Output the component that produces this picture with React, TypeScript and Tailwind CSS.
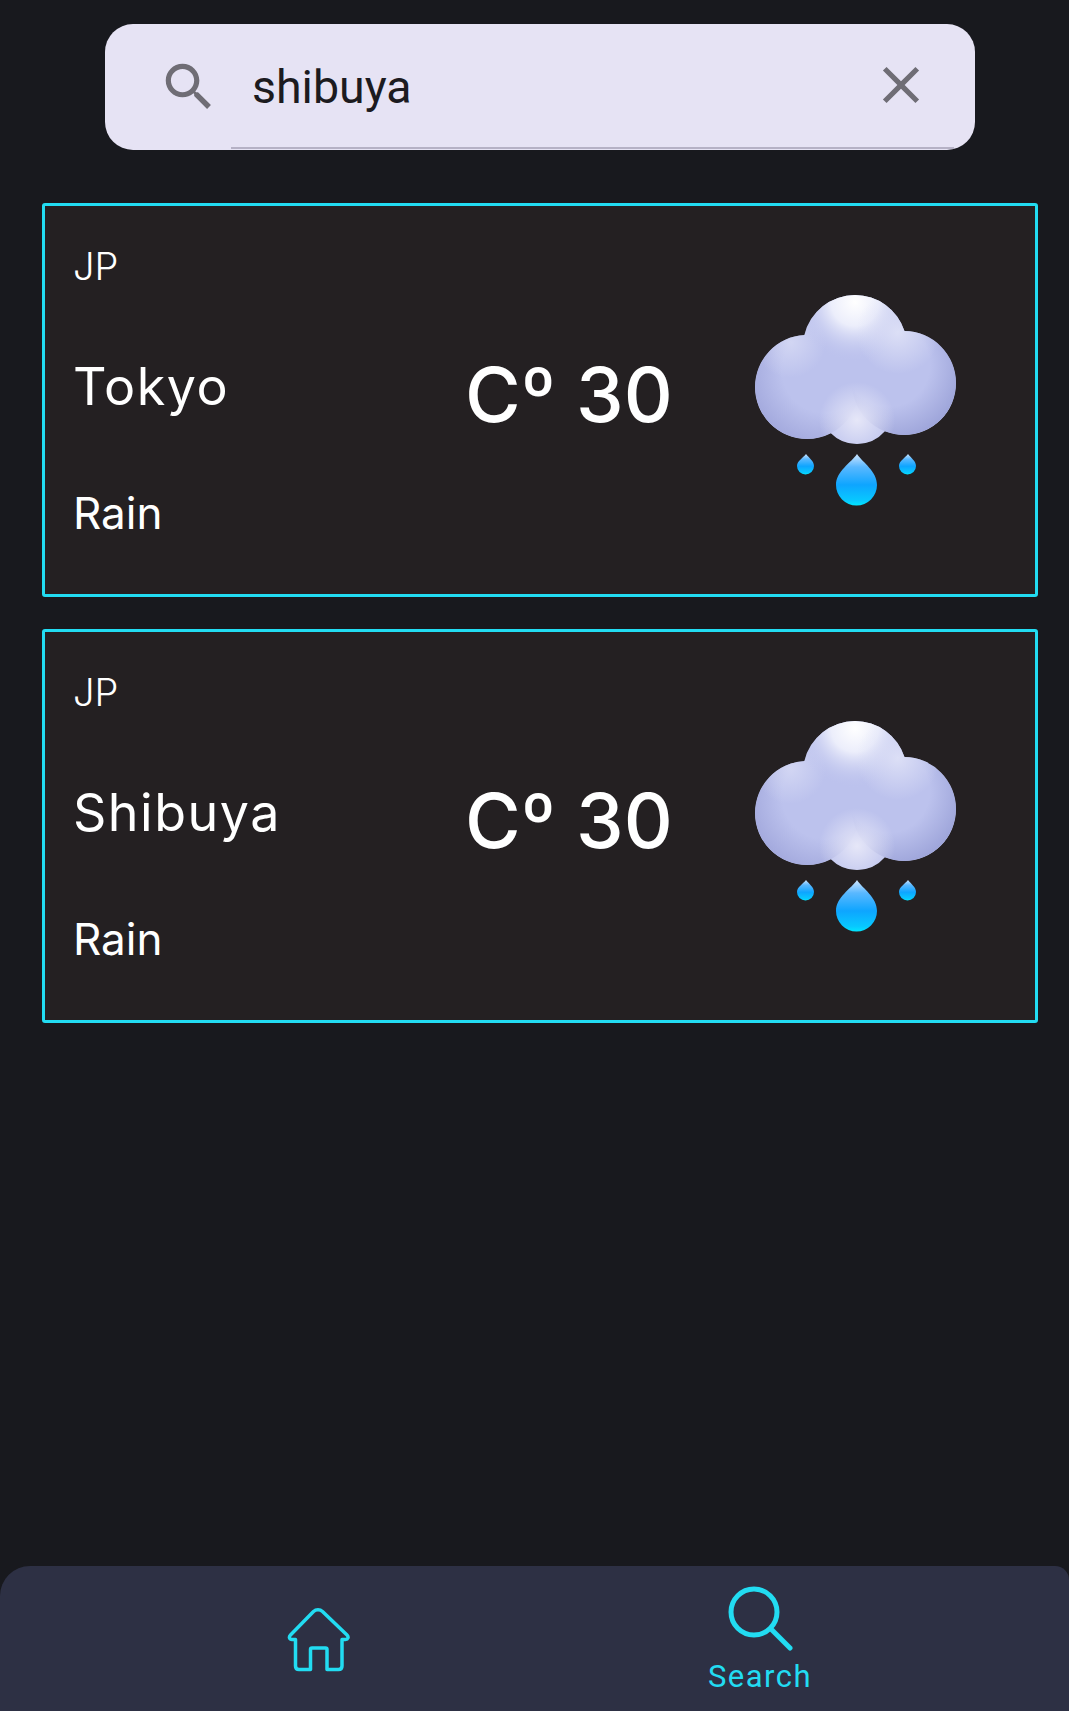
function RainCloud({ id }: { id: string }) {
  return (
    <svg width="260" height="250" viewBox="0 0 260 250" className="mb-[11px] shrink-0">
      <defs>
        <clipPath id={`${id}-shape`}>
          <circle cx="135" cy="77" r="52" />
          <circle cx="87" cy="117" r="52" />
          <circle cx="184" cy="113" r="52" />
          <circle cx="137" cy="137" r="37" />
          <rect x="95" y="85" width="80" height="50" />
        </clipPath>
        <radialGradient id={`${id}-top`} cx="135" cy="32" r="60" gradientUnits="userSpaceOnUse">
          <stop offset="0" stopColor="#ffffff" />
          <stop offset="0.4" stopColor="#eceefb" />
          <stop offset="1" stopColor="#bcc2ed" stopOpacity="0" />
        </radialGradient>
        <radialGradient id={`${id}-left`} cx="105" cy="100" r="78" gradientUnits="userSpaceOnUse">
          <stop offset="0.55" stopColor="#a3a9dd" stopOpacity="0" />
          <stop offset="1" stopColor="#a3a9dd" />
        </radialGradient>
        <radialGradient id={`${id}-right`} cx="168" cy="95" r="76" gradientUnits="userSpaceOnUse">
          <stop offset="0.55" stopColor="#9ea5da" stopOpacity="0" />
          <stop offset="1" stopColor="#9ea5da" />
        </radialGradient>
        <radialGradient id={`${id}-shine`} cx="178" cy="62" r="42" gradientUnits="userSpaceOnUse">
          <stop offset="0" stopColor="#dcdff6" />
          <stop offset="1" stopColor="#dcdff6" stopOpacity="0" />
        </radialGradient>
        <radialGradient id={`${id}-glow`} cx="70" cy="72" r="36" gradientUnits="userSpaceOnUse">
          <stop offset="0" stopColor="#dcdff6" stopOpacity="0.7" />
          <stop offset="1" stopColor="#dcdff6" stopOpacity="0" />
        </radialGradient>
        <radialGradient id={`${id}-bottom`} cx="137" cy="150" r="38" gradientUnits="userSpaceOnUse">
          <stop offset="0" stopColor="#e6e7f8" />
          <stop offset="1" stopColor="#e6e7f8" stopOpacity="0" />
        </radialGradient>
        <linearGradient id={`${id}-drop`} x1="0" y1="0" x2="0" y2="1">
          <stop offset="0" stopColor="#cfe6ff" />
          <stop offset="0.25" stopColor="#5ab8ff" />
          <stop offset="0.6" stopColor="#0ea5ff" />
          <stop offset="0.9" stopColor="#08c8ff" />
          <stop offset="1" stopColor="#00e6ff" />
        </linearGradient>
      </defs>
      <g clipPath={`url(#${id}-shape)`}>
        <rect width="260" height="190" fill="#bcc2ed" />
        <circle cx="87" cy="117" r="52" fill={`url(#${id}-left)`} />
        <circle cx="184" cy="113" r="52" fill={`url(#${id}-right)`} />
        <rect width="260" height="190" fill={`url(#${id}-glow)`} />
        <rect width="260" height="190" fill={`url(#${id}-top)`} />
        <rect width="260" height="190" fill={`url(#${id}-shine)`} />
        <rect width="260" height="190" fill={`url(#${id}-bottom)`} />
      </g>
      <path d="M137 184C131 193 116 201 116 215A20.500 20.500 0 0 0 157 215C157 201 143 193 137 184Z" fill={`url(#${id}-drop)`} />
      <path d="M86 184C83 188 77 191 77 196A8.200 8.200 0 0 0 94 196C94 191 89 188 86 184Z" fill={`url(#${id}-drop)`} />
      <path d="M188 184C185 188 179 191 179 196A8.200 8.200 0 0 0 196 196C196 191 191 188 188 184Z" fill={`url(#${id}-drop)`} />
    </svg>
  )
}

function CityCard({ id, city }: { id: string; city: string }) {
  return (
    <div className="flex h-[394px] items-center rounded-[3px] border-[3px] border-[#22dcf2] bg-[#242022] pl-[28px] pr-[55px] text-white">
      <div className="flex h-full w-[392px] shrink-0 flex-col justify-between pt-[34px] pb-[53px] font-['Inter',sans-serif] font-light">
        <p className="text-[38px] leading-[52px]">JP</p>
        <p className="mb-[4px] text-[52px] font-normal leading-[70px] tracking-[1.500px]">{city}</p>
        <p className="text-[44px] font-normal leading-[56px]">Rain</p>
      </div>
      <p className="flex-1 pb-[13px] font-['Inter',sans-serif] text-[76px] font-medium leading-none">Cº 30</p>
      <RainCloud id={id} />
    </div>
  )
}

export default function App() {
  return (
    <div className="flex h-screen flex-col overflow-hidden bg-[#18191e]">
      <div className="ml-[105px] mr-[94px] mt-[24px] flex h-[126px] items-stretch rounded-[28px] bg-[#e6e3f4]">
        <div className="flex w-[126px] shrink-0 items-center justify-center pl-[42px]">
          <svg width="62" height="62" viewBox="0 0 24 24" fill="#6f6d75">
            <path d="M15.500 14h-.79l-.28-.27C15.410 12.590 16 11.110 16 9.500 16 5.910 13.090 3 9.500 3S3 5.910 3 9.500 5.910 16 9.500 16c1.610 0 3.090-.59 4.230-1.570l.27.28v.79l5 4.990L20.490 19l-4.990-5zm-6 0C7.010 14 5 11.990 5 9.500S7.010 5 9.500 5 14 7.010 14 9.500 11.990 14 9.500 14z" />
          </svg>
        </div>
        <div className="mb-px mr-[21px] flex flex-1 items-center justify-between border-b-2 border-[#b5b1c5] pl-[21px] pr-[22px] pt-[4px]">
          <span className="font-['Roboto',sans-serif] text-[46.500px] leading-none text-[#1c1b1f]">shibuya</span>
          <svg width="62" height="62" viewBox="0 0 24 24" fill="#6f6d75" className="mb-[6px]">
            <path d="M19 6.410 17.590 5 12 10.590 6.410 5 5 6.410 10.590 12 5 17.590 6.410 19 12 13.410 17.590 19 19 17.590 13.410 12z" />
          </svg>
        </div>
      </div>

      <div className="ml-[42px] mr-[31px] mt-[53px] flex flex-col gap-[32px]">
        <CityCard id="tokyo" city="Tokyo" />
        <CityCard id="shibuya" city="Shibuya" />
      </div>

      <div className="mt-auto flex h-[145px] rounded-tl-[30px] rounded-tr-[14px] bg-[#2d3044] text-[#22dcf2]">
        <div className="flex w-[636px] items-center justify-center pt-[3px]">
          <svg width="64" height="68" viewBox="0 0 64 68" fill="none" stroke="currentColor" strokeWidth="3.500" strokeLinejoin="round">
            <path d="M27.500 5.500C30 3.300 34 3.300 36.500 5.500L61 29C63 31 62 33.500 59.500 33.500H56V60C56 62.200 54.800 63.500 52.500 63.500H41V43.500C41 42.500 40.500 42 39.500 42H26C25 42 24.500 42.500 24.500 43.500V63.500H13C11 63.500 9.500 62.200 9.500 60V33.500H6C3.500 33.500 2.500 31 4.500 29Z" />
          </svg>
        </div>
        <div className="flex flex-1 flex-col items-center pt-[19px] pr-[185px]">
          <svg width="66" height="66" viewBox="0 0 66 66" fill="none" stroke="currentColor" strokeLinecap="round" strokeWidth="5">
            <circle cx="27" cy="27" r="23" />
            <path d="M45 45L63 63" />
          </svg>
          <span className="mt-[8px] font-['Roboto',sans-serif] text-[31px] leading-[36px] tracking-[1.500px]">Search</span>
        </div>
      </div>
    </div>
  )
}
